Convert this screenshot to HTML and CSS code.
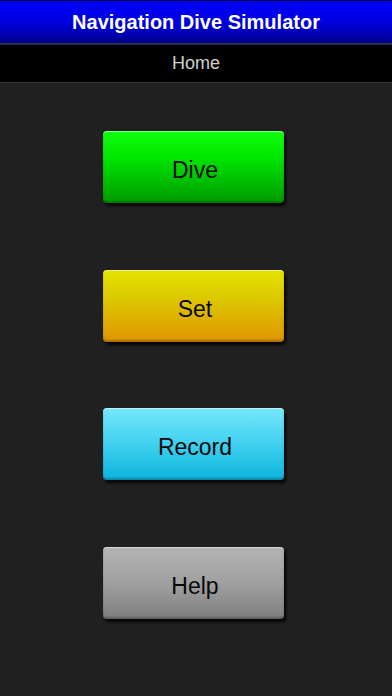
FILE: index.html
```html
<!DOCTYPE html>
<html>
<head>
<meta charset="utf-8">
<link rel="stylesheet" href="styles.css">
</head>
<body>
<div class="app">
  <header class="titlebar">Navigation Dive Simulator</header>
  <div class="subbar">Home</div>
  <main class="menu">
    <div class="btn btn-green">Dive</div>
    <div class="btn btn-yellow">Set</div>
    <div class="btn btn-cyan">Record</div>
    <div class="btn btn-gray">Help</div>
  </main>
</div>
</body>
</html>
```
FILE: styles.css
```css
html, body {
  margin: 0;
  padding: 0;
  background: #202020;
}
.app {
  width: 392px;
  height: 696px;
  display: flex;
  flex-direction: column;
  font-family: "Liberation Sans", Arial, sans-serif;
  background: #202020;
}
.titlebar {
  height: 45px;
  box-sizing: border-box;
  border-top: 1px solid #000033;
  border-bottom: 2px solid #303040;
  background: linear-gradient(#0000f8, #0000e0 50%, #00008c);
  color: #fff;
  font-size: 20px;
  font-weight: bold;
  display: flex;
  align-items: center;
  justify-content: center;
}
.subbar {
  height: 38px;
  box-sizing: border-box;
  background: #000;
  color: #d0d0d0;
  font-size: 18px;
  display: flex;
  align-items: center;
  justify-content: center;
  border-bottom: 1px solid #3a3a3a;
}
.menu {
  display: flex;
  flex-direction: column;
  align-items: center;
  padding-top: 48px;
  padding-right: 5px;
  gap: 66.5px;
}
.btn {
  width: 181px;
  height: 72px;
  box-sizing: border-box;
  padding-top: 7px;
  padding-left: 3px;
  border-radius: 4px;
  display: flex;
  align-items: center;
  justify-content: center;
  font-size: 23px;
  color: #080808;
  box-shadow: 2px 3px 3px rgba(0,0,0,0.85), inset 0 1px 0 rgba(255,255,255,0.5), inset 0 -2px 2px rgba(0,0,0,0.25);
}
.btn-green {
  background: linear-gradient(#10ff10, #00e800 35%, #009a00);
}
.btn-yellow {
  background: linear-gradient(#e4e400, #dcc800 40%, #e09400);
}
.btn-cyan {
  background: linear-gradient(#78e8fa, #40d0f0 50%, #0cb4dc);
}
.btn-gray {
  background: linear-gradient(#b4b4b4, #a0a0a0 50%, #7e7e7e);
}
```
